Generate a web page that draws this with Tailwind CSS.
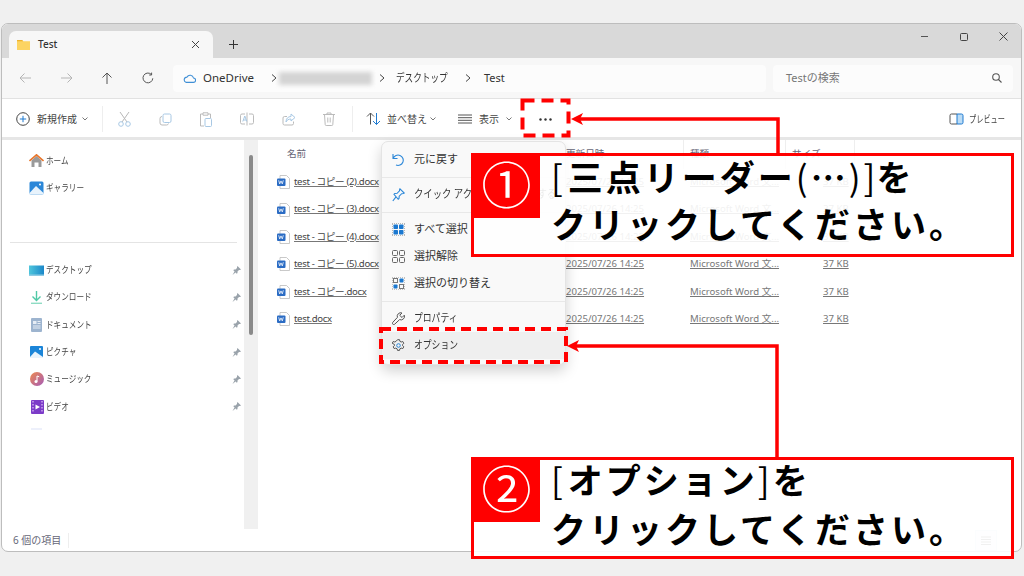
<!DOCTYPE html>
<html lang="ja">
<head>
    <meta charset="utf-8"/>
    <title>Test - エクスプローラー</title>
    <script src="https://cdn.jsdelivr.net/npm/@tailwindcss/browser@4"></script>
</head>
<body class="relative w-[1024px] h-[576px] overflow-hidden bg-[#f0f0f0] pt-[23px] px-[1px] font-['Noto_Sans','Noto_Sans_CJK_JP',sans-serif]">

<!-- window -->
<div class="w-[1021px] h-[529px] flex flex-col rounded-[7px] overflow-hidden border border-[#bdbdbd] bg-white">

    <!-- tab bar -->
    <div class="h-[34px] shrink-0 bg-[#d9d9d9] flex items-end pl-[7px]">
        <div class="w-[204px] h-[27px] bg-[#f7f7f7] rounded-t-[7px] flex items-center pl-[8px]">
            <svg width="13" height="10" viewBox="0 0 13 10"><path d="M0 1.200C0 .5.5 0 1.200 0H5l1.300 1.300H13V10H0z" fill="#fcd462"/><path d="M0 0h5l1.300 1.300H0z" fill="#eeb22e"/></svg>
            <span class="ml-[8px] text-[10px] font-medium text-[#333] w-[153px]">Test</span>
            <svg width="9" height="9" viewBox="0 0 9 9" stroke="#444" fill="none"><path d="M1 1l7 7M8 1l-7 7"/></svg>
        </div>
        <div class="h-[27px] flex items-center ml-[16px]">
            <svg width="9" height="9" viewBox="0 0 9 9" stroke="#333" fill="none"><path d="M4.500 0v9M0 4.500h9"/></svg>
        </div>
        <div class="ml-auto h-[27px] -translate-y-[8px] flex items-center gap-[31.500px] pr-[13px]">
            <svg width="7" height="9" viewBox="0 0 7 9" stroke="#555" fill="none"><path d="M0 4.500h7"/></svg>
            <svg width="8" height="8" viewBox="0 0 8 8" stroke="#444" fill="none"><rect x=".5" y=".5" width="7" height="7" rx="1"/></svg>
            <svg width="9" height="9" viewBox="0 0 9 9" stroke="#444" fill="none"><path d="M.5.5l8 8M8.500.5l-8 8"/></svg>
        </div>
    </div>

    <!-- nav bar -->
    <div class="h-[41px] shrink-0 bg-[#f7f7f7] border-b border-[#e2e2e2] flex items-center">
        <div class="w-[171px] flex items-center pl-[17px]">
            <svg class="w-[41px]" width="12" height="12" viewBox="0 0 41 12" stroke="#b5b5b5" fill="none"><path d="M12 6H1M5.500 1.500L1 6l4.500 4.500"/></svg>
            <svg class="w-[41px]" width="12" height="12" viewBox="0 0 41 12" stroke="#b5b5b5" fill="none"><path d="M1 6h11M7.500 1.500L12 6l-4.500 4.500"/></svg>
            <svg class="w-[41px]" width="12" height="12" viewBox="0 0 41 12" stroke="#555" fill="none"><path d="M6 12V1M1.500 5.500L6 1l4.500 4.500"/></svg>
            <svg width="12" height="12" viewBox="0 0 12 12" stroke="#555" fill="none"><path d="M10.800 6.300A4.900 4.900 0 1 1 9.200 2.300M9.600.6v2.400H7.200"/></svg>
        </div>
        <div class="w-[593px] h-[27px] bg-[#fcfcfc] rounded-[4px] flex items-center pl-[10px] text-[#333] whitespace-nowrap">
            <svg class="shrink-0" width="13" height="9" viewBox="0 0 13 9" fill="none" stroke="#3f8fd6" stroke-width="1.100"><path d="M3.200 8.400H10.300a2.200 2.200 0 0 0 .2-4.400A3.500 3.500 0 0 0 4 3.100a2.700 2.700 0 0 0-.8 5.300z"/></svg>
            <span class="ml-[7px] text-[11.500px] w-[56px]">OneDrive</span>
            <svg class="shrink-0 ml-[12px]" width="6" height="8" viewBox="0 0 6 8" stroke="#444" fill="none"><path d="M1 .5L5 4 1 7.500"/></svg>
            <div class="w-[93px] h-[13px] ml-[2px] bg-[#d4d4d4] blur-[2px]"></div>
            <svg class="shrink-0 ml-[7px]" width="6" height="8" viewBox="0 0 6 8" stroke="#444" fill="none"><path d="M1 .5L5 4 1 7.500"/></svg>
            <span class="w-[52px] ml-[11px] text-[11.500px] origin-left scale-x-[.75]">デスクトップ</span>
            <svg class="shrink-0 ml-[17px]" width="6" height="8" viewBox="0 0 6 8" stroke="#444" fill="none"><path d="M1 .5L5 4 1 7.500"/></svg>
            <span class="ml-[13px] text-[11px]">Test</span>
        </div>
        <div class="w-[240px] h-[27px] ml-[7px] bg-[#fcfcfc] rounded-[4px] flex items-center justify-between pl-[13px] pr-[11px]">
            <span class="text-[11px] text-[#777]">Testの検索</span>
            <svg width="10" height="10" viewBox="0 0 10 10" stroke="#555" fill="none" stroke-width="1.100"><circle cx="4" cy="4" r="3.300"/><path d="M6.500 6.500L9.500 9.500"/></svg>
        </div>
    </div>

    <!-- toolbar -->
    <div class="h-[41px] shrink-0 bg-white pt-[2px] border-b-[3px] border-[#e6e6e6] flex items-center text-[10px] text-[#444]">
        <svg class="ml-[14px]" width="14" height="14" viewBox="0 0 14 14" fill="none"><circle cx="7" cy="7" r="6.300" stroke="#444"/><path d="M7 3.800v6.400M3.800 7h6.400" stroke="#1f7ad0"/></svg>
        <span class="ml-[7px] w-[40px]">新規作成</span>
        <svg class="ml-[5px]" width="6" height="4" viewBox="0 0 6 4" stroke="#777" fill="none"><path d="M.5.5L3 3 5.500.5"/></svg>
        <div class="ml-[14px] w-px h-[26px] bg-[#eee]"></div>
        <svg class="ml-[15px]" width="13" height="16" viewBox="0 0 13 16" fill="none" stroke="#a8c8e4"><path d="M2 1l7 10M11 1L4 11" stroke="#b8b8b8"/><circle cx="3" cy="13" r="2.300"/><circle cx="10" cy="13" r="2.300"/></svg>
        <svg class="ml-[28px]" width="13" height="13" viewBox="0 0 13 13" fill="none" stroke="#bbb"><rect x="4" y="1" width="8" height="8.500" rx="1.500" stroke="#a8c8e4"/><path d="M3 3.500a2 2 0 0 0-2 2V10a2 2 0 0 0 2 2h4.500a2 2 0 0 0 2-1.500"/></svg>
        <svg class="ml-[27px]" width="13" height="15" viewBox="0 0 13 15" fill="none" stroke="#bbb"><path d="M4 2H1.500v12H5M9 2h2.500v4M4 .8h5v2.400H4z"/><rect x="6" y="6.500" width="6.500" height="8" rx="1" stroke="#a8c8e4"/></svg>
        <svg class="ml-[28px]" width="14" height="14" viewBox="0 0 14 14" fill="none" stroke="#bbb"><path d="M5 2H2a1.500 1.500 0 0 0-1.500 1.500v7A1.500 1.500 0 0 0 2 12h3M9 2h3a1.500 1.500 0 0 1 1.500 1.500v7A1.500 1.500 0 0 1 12 12H9M7 .5v13"/><path d="M2.800 9.500L4.800 4l2 5.500M3.500 8h2.600" stroke="#a8c8e4"/></svg>
        <svg class="ml-[28px]" width="14" height="13" viewBox="0 0 14 13" fill="none" stroke="#bbb"><path d="M11.500 8.500v2a1.500 1.500 0 0 1-1.500 1.500H2.500A1.500 1.500 0 0 1 1 10.500V5a1.500 1.500 0 0 1 1.500-1.500H5"/><path d="M9 1l4 3.500L9 8V6C6.500 6 5 7 4 9c0-3.500 2-5.500 5-5.500z" stroke="#a8c8e4"/></svg>
        <svg class="ml-[27px]" width="12" height="14" viewBox="0 0 12 14" fill="none" stroke="#bbb"><path d="M0 2.500h12M4 2.500V1h4v1.500M1.500 2.500l.7 10a1 1 0 0 0 1 1h5.600a1 1 0 0 0 1-1l.7-10M4.800 5.500v5M7.200 5.500v5"/></svg>
        <div class="ml-[17px] w-px h-[26px] bg-[#eee]"></div>
        <svg class="ml-[13px]" width="15" height="14" viewBox="0 0 15 14" fill="none"><path d="M4.500 12.500V1M1 4.500L4.500 1 8 4.500" stroke="#555"/><path d="M10.500 1v11.500M7 9l3.500 3.500L14 9" stroke="#1f7ad0"/></svg>
        <span class="ml-[6px] w-[37px] whitespace-nowrap">並べ替え</span>
        <svg class="ml-[6px]" width="6" height="4" viewBox="0 0 6 4" stroke="#777" fill="none"><path d="M.5.500L3 3 5.500.500"/></svg>
        <svg class="ml-[22px]" width="14" height="10" viewBox="0 0 14 10" stroke="#555" fill="none"><path d="M0 1h14M0 3.700h14M0 6.300h14M0 9h14"/></svg>
        <span class="ml-[7px] w-[22px]">表示</span>
        <svg class="ml-[5px]" width="6" height="4" viewBox="0 0 6 4" stroke="#777" fill="none"><path d="M.5.500L3 3 5.500.500"/></svg>
        <svg class="ml-[27px]" width="13" height="3" viewBox="0 0 13 3" fill="#333"><circle cx="1.500" cy="1.500" r="1.200"/><circle cx="6.500" cy="1.500" r="1.200"/><circle cx="11.500" cy="1.500" r="1.200"/></svg>
        <svg class="ml-auto" width="15" height="12" viewBox="0 0 15 12" fill="none"><path d="M8 1h4.500A1.500 1.500 0 0 1 14 2.500v7a1.500 1.500 0 0 1-1.500 1.500H8z" fill="#bcdcf5" stroke="#1f7ad0"/><path d="M8 1H2.500A1.500 1.500 0 0 0 1 2.500v7A1.500 1.500 0 0 0 2.500 11H8" stroke="#555"/></svg>
        <span class="ml-[5px] mr-[17px] w-[35px] whitespace-nowrap text-[10px] origin-left scale-x-[.72]">プレビュー</span>
    </div>

    <!-- body -->
    <div class="flex-1 flex min-h-0">
        <!-- sidebar -->
        <div class="w-[242px] shrink-0 pt-[7px] text-[9.500px] text-[#444]">
            <div class="h-[27.300px] flex items-center pl-[27px] gap-[2px]">
                <svg class="shrink-0" width="15" height="13" viewBox="0 0 15 13"><path d="M2.500 6.500L7.500 2l5 4.500V13h-3V8.500h-4V13h-3z" fill="#9a9a9a"/><path d="M.5 7L7.500.8 14.500 7" fill="none" stroke="#e8762c" stroke-width="1.600"/></svg>
                <span class="origin-left scale-x-[.8]">ホーム</span>
            </div>
            <div class="h-[27.300px] flex items-center pl-[27px] gap-[2px]">
                <svg class="shrink-0" width="15" height="14" viewBox="0 0 15 14"><rect x=".5" y=".5" width="14" height="13" rx="1.500" fill="#2b87d8"/><path d="M.5 12L7 5l7.500 7v1.500H.5z" fill="#e8f3fc"/><circle cx="11" cy="3.500" r="1" fill="#fff"/></svg>
                <span class="origin-left scale-x-[.8]">ギャラリー</span>
            </div>
            <div class="mt-[40px] mb-[14px] ml-[8px] w-[227px] h-px bg-[#e4e4e4]"></div>
            <div class="h-[27.300px] flex items-center pl-[27px] pr-[3px]">
                <svg class="shrink-0" width="15" height="11" viewBox="0 0 15 11"><defs><linearGradient id="d" x1="0" x2="1"><stop offset="0" stop-color="#4fc6dc"/><stop offset="1" stop-color="#1b87c9"/></linearGradient></defs><rect width="15" height="9.500" y=".5" fill="url(#d)"/><rect y="9.500" width="15" height="1.500" fill="#8fcbe4"/></svg>
                <span class="ml-[2px] origin-left scale-x-[.8]">デスクトップ</span>
                <svg class="ml-auto" width="9" height="9" viewBox="0 0 9 9" fill="#9aa3ab"><path d="M5.500 0L9 3.500 8 4l-1 0-1.500 1.500V7L4.800 7.700 1.300 4.200 2 3.500h1.500L5 2V1zM2.500 5.500L3.500 6.500 .5 9z"/></svg>
            </div>
            <div class="h-[27.300px] flex items-center pl-[27px] pr-[3px]">
                <svg class="shrink-0" width="15" height="13" viewBox="0 0 15 13" fill="none" stroke="#50c9a6" stroke-width="1.400"><path d="M7.500 0v9M3.500 5.500l4 4 4-4"/><path d="M2 12.300h11" stroke="#8fdcc4"/></svg>
                <span class="ml-[2px] origin-left scale-x-[.8]">ダウンロード</span>
                <svg class="ml-auto" width="9" height="9" viewBox="0 0 9 9" fill="#9aa3ab"><path d="M5.500 0L9 3.500 8 4l-1 0-1.500 1.500V7L4.800 7.700 1.300 4.200 2 3.500h1.500L5 2V1zM2.500 5.500L3.500 6.500 .5 9z"/></svg>
            </div>
            <div class="h-[27.300px] flex items-center pl-[28px] pr-[3px]">
                <svg class="shrink-0" width="13" height="14" viewBox="0 0 13 14"><rect x="1" width="11" height="14" rx="1" fill="#9db4cf"/><rect x="3" y="3" width="3.500" height="3" fill="#e6edf5"/><path d="M7.500 3.500h3M7.500 5.500h3M3 8h7.500M3 10h7.500" stroke="#e6edf5"/></svg>
                <span class="ml-[3px] origin-left scale-x-[.8]">ドキュメント</span>
                <svg class="ml-auto" width="9" height="9" viewBox="0 0 9 9" fill="#9aa3ab"><path d="M5.500 0L9 3.500 8 4l-1 0-1.500 1.500V7L4.800 7.700 1.300 4.200 2 3.500h1.500L5 2V1zM2.500 5.500L3.500 6.500 .5 9z"/></svg>
            </div>
            <div class="h-[27.300px] flex items-center pl-[28px] pr-[3px]">
                <svg class="shrink-0" width="13" height="13" viewBox="0 0 13 13"><rect width="13" height="12" rx="1" fill="#1b85d8"/><path d="M0 11l5-5.500L13 11v1H0z" fill="#e8f3fc"/><circle cx="10" cy="3" r="1" fill="#fff"/></svg>
                <span class="ml-[3px] origin-left scale-x-[.8]">ピクチャ</span>
                <svg class="ml-auto" width="9" height="9" viewBox="0 0 9 9" fill="#9aa3ab"><path d="M5.500 0L9 3.500 8 4l-1 0-1.500 1.500V7L4.800 7.700 1.300 4.200 2 3.500h1.500L5 2V1zM2.500 5.500L3.500 6.500 .5 9z"/></svg>
            </div>
            <div class="h-[27.300px] flex items-center pl-[28px] pr-[3px]">
                <svg class="shrink-0" width="14" height="14" viewBox="0 0 14 14"><defs><linearGradient id="m" x1="0" x2="1" y1="0" y2="1"><stop offset="0" stop-color="#ee8a4e"/><stop offset="1" stop-color="#a55bb8"/></linearGradient></defs><circle cx="7" cy="7" r="7" fill="url(#m)"/><circle cx="6" cy="9.500" r="1.500" fill="#fff"/><path d="M7 9.500V4l2.200.8" stroke="#fff" fill="none"/></svg>
                <span class="ml-[2px] origin-left scale-x-[.8]">ミュージック</span>
                <svg class="ml-auto" width="9" height="9" viewBox="0 0 9 9" fill="#9aa3ab"><path d="M5.500 0L9 3.500 8 4l-1 0-1.500 1.500V7L4.800 7.700 1.300 4.200 2 3.500h1.500L5 2V1zM2.500 5.500L3.500 6.500 .5 9z"/></svg>
            </div>
            <div class="h-[27.300px] flex items-center pl-[29px] pr-[3px]">
                <svg class="shrink-0" width="13" height="14" viewBox="0 0 13 14"><rect width="13" height="14" rx="1" fill="#7c3bc8"/><path d="M2 1v12M11 1v12" stroke="#c9a7ee" stroke-dasharray="1.500 1.500" stroke-width="1.500"/><path d="M4.500 4.500l4.500 2.500-4.500 2.500z" fill="#fff"/></svg>
                <span class="ml-[2px] origin-left scale-x-[.8]">ビデオ</span>
                <svg class="ml-auto" width="9" height="9" viewBox="0 0 9 9" fill="#9aa3ab"><path d="M5.500 0L9 3.500 8 4l-1 0-1.500 1.500V7L4.800 7.700 1.300 4.200 2 3.500h1.500L5 2V1zM2.500 5.500L3.500 6.500 .5 9z"/></svg>
            </div>
            <div class="mt-[8px] ml-[29px] w-[11px] h-[2px] bg-[#edf0fb]"></div>
        </div>

        <!-- scrollbar -->
        <div class="w-[14px] shrink-0 bg-[#f0f0f0] pt-[15px] pl-[5px]">
            <div class="w-[4px] h-[180px] rounded-full bg-[#8a8a8a]"></div>
        </div>

        <!-- file list -->
        <div class="flex-1 min-w-0 text-[9.600px]">
            <div class="h-[28.500px] flex items-center text-[#667] ">
                <span class="w-[308px] pl-[29px]">名前</span>
                <span class="w-[118px] h-full flex items-center border-r border-[#eee]">更新日時</span>
                <span class="w-[102px] h-full flex items-center pl-[6px] border-r border-[#eee]">種類</span>
                <span class="w-[69px] h-full flex items-center pl-[6px] border-r border-[#eee]">サイズ</span>
            </div>
            <div class="h-[27.400px] flex items-center pl-[19px] underline text-[#777] whitespace-nowrap">
                <svg width="13" height="14" viewBox="0 0 13 14"><path d="M3 .5h6.500L12.500 3.500v10H3z" fill="#fff" stroke="#bbb" stroke-width=".8"/><rect y="3.500" width="8.500" height="7.500" rx="1" fill="#2b6cc4"/><path d="M1.700 5.300l1 3.600 1.300-3 1.300 3 1-3.600" stroke="#fff" fill="none" stroke-width=".8"/></svg>
                <span class="w-[272px] ml-[4px] text-[#444] tracking-[-0.35px]">test - コピー (2).docx</span>
                <span class="w-[124px]">2025/07/26 14:25</span>
                <span class="w-[133px]">Microsoft Word 文...</span>
                <span>37 KB</span>
            </div>
            <div class="h-[27.400px] flex items-center pl-[19px] underline text-[#777] whitespace-nowrap">
                <svg width="13" height="14" viewBox="0 0 13 14"><path d="M3 .5h6.500L12.500 3.500v10H3z" fill="#fff" stroke="#bbb" stroke-width=".8"/><rect y="3.500" width="8.500" height="7.500" rx="1" fill="#2b6cc4"/><path d="M1.700 5.300l1 3.600 1.300-3 1.300 3 1-3.600" stroke="#fff" fill="none" stroke-width=".8"/></svg>
                <span class="w-[272px] ml-[4px] text-[#444] tracking-[-0.35px]">test - コピー (3).docx</span>
                <span class="w-[124px]">2025/07/26 14:25</span>
                <span class="w-[133px]">Microsoft Word 文...</span>
                <span>37 KB</span>
            </div>
            <div class="h-[27.400px] flex items-center pl-[19px] underline text-[#777] whitespace-nowrap">
                <svg width="13" height="14" viewBox="0 0 13 14"><path d="M3 .5h6.500L12.500 3.500v10H3z" fill="#fff" stroke="#bbb" stroke-width=".8"/><rect y="3.500" width="8.500" height="7.500" rx="1" fill="#2b6cc4"/><path d="M1.700 5.300l1 3.600 1.300-3 1.300 3 1-3.600" stroke="#fff" fill="none" stroke-width=".8"/></svg>
                <span class="w-[272px] ml-[4px] text-[#444] tracking-[-0.35px]">test - コピー (4).docx</span>
                <span class="w-[124px]">2025/07/26 14:25</span>
                <span class="w-[133px]">Microsoft Word 文...</span>
                <span>37 KB</span>
            </div>
            <div class="h-[27.400px] flex items-center pl-[19px] underline text-[#777] whitespace-nowrap">
                <svg width="13" height="14" viewBox="0 0 13 14"><path d="M3 .5h6.500L12.500 3.500v10H3z" fill="#fff" stroke="#bbb" stroke-width=".8"/><rect y="3.500" width="8.500" height="7.500" rx="1" fill="#2b6cc4"/><path d="M1.700 5.300l1 3.600 1.300-3 1.300 3 1-3.600" stroke="#fff" fill="none" stroke-width=".8"/></svg>
                <span class="w-[272px] ml-[4px] text-[#444] tracking-[-0.35px]">test - コピー (5).docx</span>
                <span class="w-[124px]">2025/07/26 14:25</span>
                <span class="w-[133px]">Microsoft Word 文...</span>
                <span>37 KB</span>
            </div>
            <div class="h-[27.400px] flex items-center pl-[19px] underline text-[#777] whitespace-nowrap">
                <svg width="13" height="14" viewBox="0 0 13 14"><path d="M3 .5h6.500L12.500 3.500v10H3z" fill="#fff" stroke="#bbb" stroke-width=".8"/><rect y="3.500" width="8.500" height="7.500" rx="1" fill="#2b6cc4"/><path d="M1.700 5.300l1 3.600 1.300-3 1.300 3 1-3.600" stroke="#fff" fill="none" stroke-width=".8"/></svg>
                <span class="w-[272px] ml-[4px] text-[#444] tracking-[-0.35px]">test - コピー.docx</span>
                <span class="w-[124px]">2025/07/26 14:25</span>
                <span class="w-[133px]">Microsoft Word 文...</span>
                <span>37 KB</span>
            </div>
            <div class="h-[27.400px] flex items-center pl-[19px] underline text-[#777] whitespace-nowrap">
                <svg width="13" height="14" viewBox="0 0 13 14"><path d="M3 .5h6.500L12.500 3.500v10H3z" fill="#fff" stroke="#bbb" stroke-width=".8"/><rect y="3.500" width="8.500" height="7.500" rx="1" fill="#2b6cc4"/><path d="M1.700 5.300l1 3.600 1.300-3 1.300 3 1-3.600" stroke="#fff" fill="none" stroke-width=".8"/></svg>
                <span class="w-[272px] ml-[4px] text-[#444] tracking-[-0.35px]">test.docx</span>
                <span class="w-[124px]">2025/07/26 14:25</span>
                <span class="w-[133px]">Microsoft Word 文...</span>
                <span>37 KB</span>
            </div>
        </div>
    </div>

    <!-- status bar -->
    <div class="h-[22px] shrink-0 flex items-center pl-[11px] text-[10px] text-[#667]">
        <span class="w-[56px] border-r border-[#eee]">6 個の項目</span>
        <div class="ml-auto w-[22px] h-[21px] mr-[24px] border border-[#d6e6f5] bg-[#f4f9fd] flex items-center justify-center">
            <svg width="10" height="9" viewBox="0 0 10 9" stroke="#666"><path d="M0 1h10M0 3.500h10M0 6h10M0 8.500h10"/></svg>
        </div>
    </div>
</div>

<!-- context menu -->
<div class="absolute left-[381px] top-[141px] w-[185px] h-[224px] pt-[4px] rounded-[7px] bg-[#f9f9f9] border border-[#e4e4e4] shadow-[0_6px_14px_rgba(0,0,0,0.18)] text-[11px] text-[#333]">
    <div class="h-[27px] flex items-center pl-[10px] gap-[9px]">
        <svg class="shrink-0" width="13" height="13" viewBox="0 0 13 13" fill="none" stroke="#2b87d8" stroke-width="1.100"><path d="M1 1v4.500h4.500M1.200 5.300A5.200 5.200 0 1 1 4 12"/></svg>
        <span>元に戻す</span>
    </div>
    <div class="mt-[4px] mb-[3px] h-px bg-[#e8e8e8]"></div>
    <div class="h-[27px] flex items-center pl-[10px] gap-[9px] whitespace-nowrap">
        <svg class="shrink-0" width="13" height="14" viewBox="0 0 13 14" fill="none" stroke="#2b87d8" stroke-width="1.100"><path d="M8 .8l4.200 4.200-1 .5-1.500.2-2.500 2.500-.2 2.300-.8.800L2 6.300l.8-.8 2.300-.2L7.500 2.800l.2-1.500zM3.800 9.200L.8 13"/></svg>
        <span class="w-[142px] origin-left scale-x-[.85]">クイック アクセスにピン留めする</span>
    </div>
    <div class="mt-[4px] mb-[3px] h-px bg-[#e8e8e8]"></div>
    <div class="h-[27px] flex items-center pl-[10px] gap-[9px]">
        <svg class="shrink-0" width="13" height="13" viewBox="0 0 13 13"><path d="M0 0h13v13H0z" fill="none" stroke="#777" stroke-dasharray="1 1"/><rect x="1.500" y="1.500" width="4.500" height="4.500" rx=".8" fill="#1b78d0"/><rect x="7" y="1.500" width="4.500" height="4.500" rx=".8" fill="#1b78d0"/><rect x="1.500" y="7" width="4.500" height="4.500" rx=".8" fill="#1b78d0"/><rect x="7" y="7" width="4.500" height="4.500" rx=".8" fill="#1b78d0"/></svg>
        <span>すべて選択</span>
    </div>
    <div class="h-[27px] flex items-center pl-[10px] gap-[9px]">
        <svg class="shrink-0" width="13" height="13" viewBox="0 0 13 13" fill="none" stroke="#666"><rect x=".5" y=".5" width="5" height="5" rx="1"/><rect x="7.500" y=".5" width="5" height="5" rx="1"/><rect x=".5" y="7.500" width="5" height="5" rx="1"/><rect x="7.500" y="7.500" width="5" height="5" rx="1"/></svg>
        <span>選択解除</span>
    </div>
    <div class="h-[27px] flex items-center pl-[10px] gap-[9px]">
        <svg class="shrink-0" width="13" height="13" viewBox="0 0 13 13"><path d="M0 0h13v13H0z" fill="none" stroke="#888" stroke-dasharray="1 1"/><rect x="1.500" y="1.500" width="4" height="4" fill="none" stroke="#777"/><rect x="7.500" y="1.500" width="4" height="4" rx=".8" fill="#1b78d0"/><rect x="1.500" y="7.500" width="4" height="4" rx=".8" fill="#1b78d0"/><rect x="7.500" y="7.500" width="4" height="4" fill="none" stroke="#777"/></svg>
        <span>選択の切り替え</span>
    </div>
    <div class="mt-[4px] mb-[3px] h-px bg-[#e8e8e8]"></div>
    <div class="h-[27px] flex items-center pl-[10px] gap-[9px]">
        <svg class="shrink-0" width="13" height="13" viewBox="0 0 13 13" fill="none" stroke="#555"><path d="M12.300 3.200L10 5.500 7.700 3.300 10 1a3.500 3.500 0 0 0-4.600 4.400L.8 10.300a1.300 1.300 0 0 0 1.900 1.900l4.900-4.600a3.500 3.500 0 0 0 4.700-4.400z"/></svg>
        <span class="origin-left scale-x-[.8]">プロパティ</span>
    </div>
    <div class="h-[27px] flex items-center pl-[10px] gap-[9px] bg-[#efefef]">
        <svg class="shrink-0" width="13" height="13" viewBox="0 0 13 13" fill="none" stroke="#555"><path d="M5.500.7h2l.4 1.600 1.300.7 1.600-.5 1 1.800-1.200 1.100v1.300l1.200 1.100-1 1.800-1.600-.5-1.300.7-.4 1.600h-2l-.4-1.600-1.300-.7-1.600.5-1-1.800 1.200-1.100V5.400L.2 4.300l1-1.800 1.600.5 1.300-.7z"/><circle cx="6.500" cy="6.500" r="1.800" stroke="#2b87d8"/></svg>
        <span class="origin-left scale-x-[.8]">オプション</span>
    </div>
</div>

<!-- red dashed boxes and arrows -->
<svg class="absolute left-0 top-0 pointer-events-none" width="1024" height="576" viewBox="0 0 1024 576" fill="none" stroke="#ff0000">
    <rect x="522.500" y="100.500" width="46" height="35" stroke-width="4" stroke-dasharray="12 7"/>
    <rect x="381" y="329" width="185" height="33" stroke-width="4" stroke-dasharray="10 6"/>
    <path d="M778 155V119H580" stroke-width="3.500"/>
    <path d="M777 458V346H576" stroke-width="3.500"/>
    <path d="M571 119l12-6-3 6 3 6z" fill="#ff0000" stroke="none"/>
    <path d="M567 346l12-6-3 6 3 6z" fill="#ff0000" stroke="none"/>
</svg>

<!-- callouts -->
<div class="absolute left-[471px] top-[153px] w-[543px] h-[104px] border-[3px] border-[#ff0000] bg-white/90 flex items-start font-['Noto_Sans_CJK_JP',sans-serif] text-black">
    <div class="-mt-[3px] -ml-[3px] w-[69px] h-[65px] shrink-0 bg-[#ff0000] text-white text-[50px] leading-[58px] pl-[2px] text-center">①</div>
    <p class="ml-[11px] -mt-[4px] text-[35px] leading-[47px] font-bold tracking-[3px] whitespace-nowrap"><span class="font-normal tracking-[5px]">[</span>三点リーダー<span class="font-normal tracking-[3px]">(</span>⋯<span class="font-normal tracking-[3px]">)</span><span class="font-normal tracking-[1px]">]</span>を<br/>クリックしてください。</p>
</div>
<div class="absolute left-[471px] top-[457px] w-[543px] h-[102px] border-[3px] border-[#ff0000] bg-white/90 flex items-start font-['Noto_Sans_CJK_JP',sans-serif] text-black">
    <div class="-mt-[3px] -ml-[3px] w-[69px] h-[65px] shrink-0 bg-[#ff0000] text-white text-[50px] leading-[58px] pl-[2px] text-center">②</div>
    <p class="ml-[11px] -mt-[6px] text-[35px] leading-[49px] font-bold tracking-[3px] whitespace-nowrap"><span class="font-normal tracking-[5px]">[</span>オプション<span class="font-normal tracking-[3px]">]</span>を<br/>クリックしてください。</p>
</div>

</body>
</html>
